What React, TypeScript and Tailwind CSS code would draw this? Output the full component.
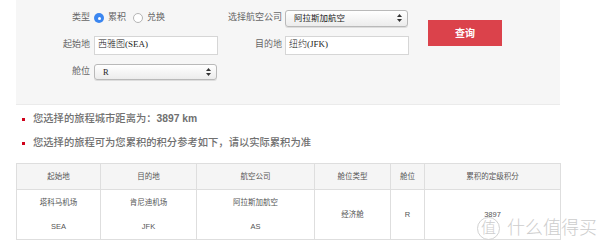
import React from "react";

const cols = [
  { title: "起始地", w: "w-[84px]", lines: ["塔科马机场", "SEA"] },
  { title: "目的地", w: "w-[96px]", lines: ["肯尼迪机场", "JFK"] },
  { title: "航空公司", w: "w-[118px]", lines: ["阿拉斯加航空", "AS"] },
  { title: "舱位类型", w: "w-[76px]", lines: ["经济舱"] },
  { title: "舱位", w: "w-[34px]", lines: ["R"] },
  { title: "累积的定级积分", w: "w-[136px]", lines: ["3897"] },
];

const SelectArrow = () => (
  <svg width="5" height="8" viewBox="0 0 5 8" className="shrink-0">
    <path d="M2.5 0 L5 3 L0 3 Z" fill="#333" />
    <path d="M2.5 8 L5 5 L0 5 Z" fill="#333" />
  </svg>
);

const Select = ({ value, className }: { value: string; className: string }) => (
  <div
    className={`flex items-center justify-between rounded-[3px] border border-[#b9b9b9] bg-gradient-to-b from-white to-[#ececec] pl-[8px] pr-[5px] text-[8.5px] text-[#222] shadow-[0_1px_0_#ddd] ${className}`}
    style={{ fontFamily: '"Liberation Serif", "Noto Sans CJK SC", serif' }}
  >
    <span>{value}</span>
    <SelectArrow />
  </div>
);

const Input = ({ value }: { value: string }) => (
  <div
    className="flex h-[19px] items-center border border-[#d6d6d6] bg-white pl-[3px] text-[9px] font-light text-[#222]"
    style={{ fontFamily: '"Liberation Serif", "Noto Sans CJK SC", serif' }}
  >
    {value}
  </div>
);

const Label = ({ text }: { text: string }) => (
  <div className="text-right text-[9px] text-[#666]">{text}</div>
);

export default function App() {
  return (
    <div
      className="relative h-[244px] w-[600px] overflow-hidden bg-white"
      style={{ fontFamily: '"Helvetica", "Liberation Sans", "Noto Sans CJK SC", sans-serif' }}
    >
      <div className="ml-[16px] w-[544px]">
        {/* search form */}
        <div className="flex h-[105px] border-b border-[#ebebeb] bg-[#f6f6f6] pt-[5px]">
          <div className="grid grid-cols-[74px_128px_64px_126px] grid-rows-[26px_28px_26px] items-center">
            <Label text="类型" />
            <div className="ml-[4px] flex items-center text-[9px] text-[#666]">
              <span className="flex h-[10px] w-[10px] items-center justify-center rounded-full bg-[#3b86f0]">
                <span className="h-[3px] w-[3px] rounded-full bg-white" />
              </span>
              <span className="ml-[4px]">累积</span>
              <span className="ml-[7px] h-[10px] w-[10px] rounded-full border border-[#b5b5b5] bg-white" />
              <span className="ml-[4px]">兑换</span>
            </div>
            <Label text="选择航空公司" />
            <Select value="阿拉斯加航空" className="ml-[3px] h-[17px] w-[123px]" />

            <Label text="起始地" />
            <div className="ml-[4px] w-[124px]">
              <Input value="西雅图(SEA)" />
            </div>
            <Label text="目的地" />
            <div className="ml-[3px] w-[124px]">
              <Input value="纽约(JFK)" />
            </div>

            <Label text="舱位" />
            <Select value="R" className="ml-[4px] h-[16px] w-[123px]" />
            <div />
            <div />
          </div>
          <button className="ml-[20px] mt-[15px] h-[26px] w-[74px] bg-[#db424b] text-[10px] font-bold text-white">
            查询
          </button>
        </div>

        {/* notes */}
        <ul className="pt-[2px] text-[10.3px] font-medium text-[#707070]">
          <li className="flex h-[24px] items-center">
            <span className="ml-[6px] h-[3px] w-[3px] bg-[#d0021b]" />
            <span className="ml-[8px]">
              您选择的旅程城市距离为：<span className="font-bold">3897 km</span>
            </span>
          </li>
          <li className="flex h-[24px] items-center">
            <span className="ml-[6px] h-[3px] w-[3px] bg-[#d0021b]" />
            <span className="ml-[8px]">您选择的旅程可为您累积的积分参考如下，请以实际累积为准</span>
          </li>
        </ul>

        {/* result table */}
        <table className="mt-[8px] w-[544px] table-fixed border-collapse border border-[#dedede] text-[7.5px] text-[#555]">
          <thead>
            <tr className="h-[26px] bg-[#f5f5f5]">
              {cols.map((c) => (
                <th key={c.title} className={`${c.w} border border-[#dedede] font-normal`}>
                  {c.title}
                </th>
              ))}
            </tr>
          </thead>
          <tbody>
            <tr className="h-[50px]">
              {cols.map((c) => (
                <td key={c.title} className="border border-[#dedede] text-center">
                  <div className="flex flex-col items-center gap-[13px]">
                    {c.lines.map((l) => (
                      <span key={l}>{l}</span>
                    ))}
                  </div>
                </td>
              ))}
            </tr>
          </tbody>
        </table>
      </div>

      {/* watermark */}
      <div className="absolute left-[477px] top-[215px] flex items-center text-[#cdcdcd] [text-shadow:0_0_2px_#fff]">
        <span className="flex h-[23px] w-[23px] items-center justify-center rounded-full border-[1.5px] border-[#d2d2d2] text-[15px] font-light">
          值
        </span>
        <span className="ml-[7px] text-[18px] font-light">什么值得买</span>
      </div>
    </div>
  );
}
